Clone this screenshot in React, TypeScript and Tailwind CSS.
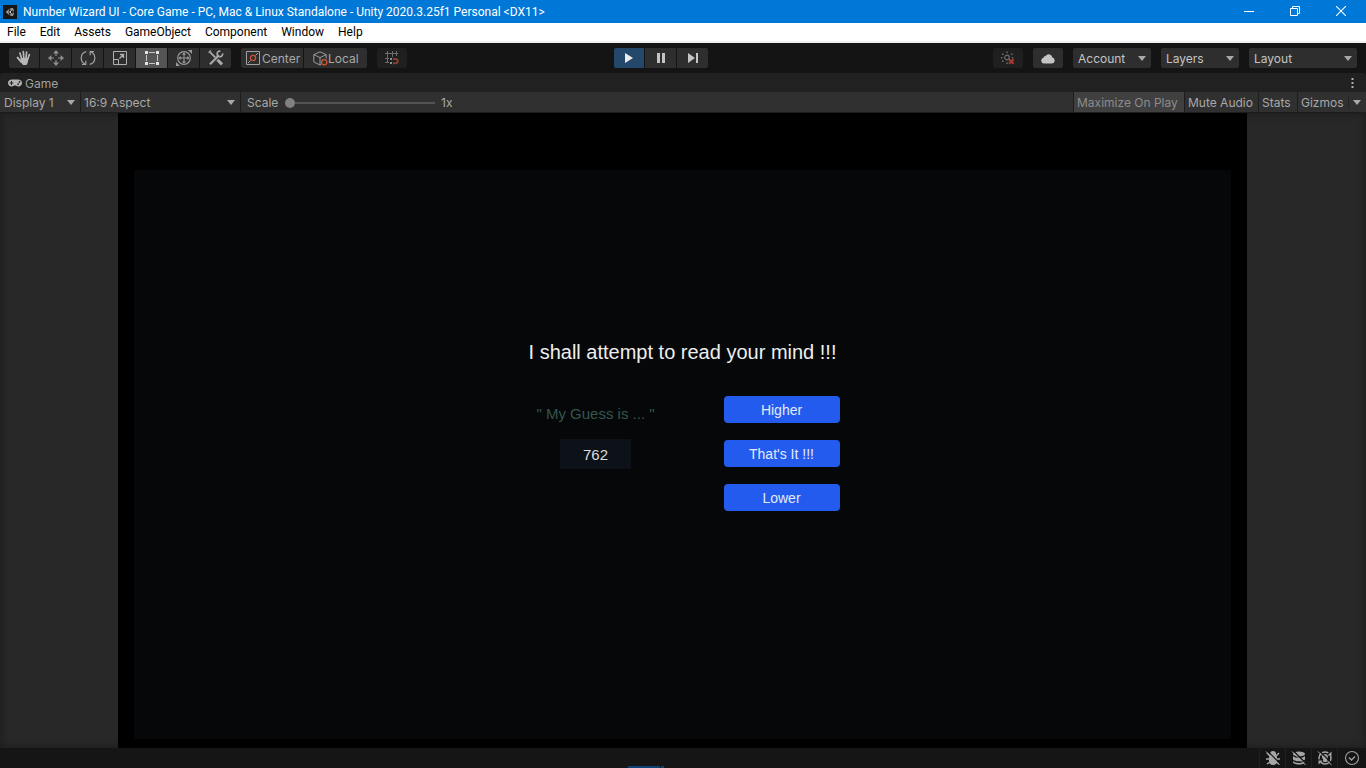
import React from "react";
import { FaGamepad } from "react-icons/fa";

const ui = "font-['Inter',sans-serif]";

function Caret({ className = "" }: { className?: string }) {
  return (
    <svg className={className} width="8" height="5" viewBox="0 0 8 5" aria-hidden="true">
      <path d="M0 0h8L4 5z" fill="currentColor" />
    </svg>
  );
}

function Dropdown({
  label,
  options,
  className,
  selectClassName,
}: {
  label: string;
  options: string[];
  className: string;
  selectClassName: string;
}) {
  return (
    <div className={`relative flex items-center ${className}`}>
      <select
        aria-label={label}
        className={`h-full w-full appearance-none bg-transparent pt-px text-[12px] leading-[19px] outline-none ${selectClassName}`}
      >
        {options.map((o) => (
          <option key={o}>{o}</option>
        ))}
      </select>
      <Caret className="pointer-events-none absolute right-[5px] text-[#a8a8a8]" />
    </div>
  );
}

function UnityLogo() {
  return (
    <svg width="14" height="14" viewBox="0 0 14 14" aria-hidden="true">
      <rect width="14" height="14" fill="#161616" />
      <g fill="none" stroke="#c8c8c8" strokeWidth="1">
        <path d="M3.4 7l2.8-2.4M3.4 7l2.8 2.4M4 7h3.200" />
        <path d="M6.8 4.2l3-.6.4 2.8M6.8 9.8l3 .6.4-2.8M7.2 7l1.800-2.800M7.200 7L9 9.800" />
      </g>
    </svg>
  );
}

function HandIcon() {
  return (
    <svg width="16" height="16" viewBox="0 0 16 16" fill="none" stroke="#b8b8b8" strokeLinecap="round" aria-hidden="true">
      <path d="M5.600 8.500L3.900 3M7.800 8L7.300 1.500M10 8l.6-6M11.800 9l1.500-4.500" strokeWidth="1.7" />
      <path d="M1.600 7.600l3.400 4" strokeWidth="2" />
      <path d="M4.800 8h7.600l-.6 4.500L10.500 15H7l-2.800-3.500z" fill="#b8b8b8" stroke="none" />
    </svg>
  );
}

function MoveIcon() {
  return (
    <svg width="16" height="16" viewBox="0 0 16 16" fill="#8f8f8f" aria-hidden="true">
      <path d="M8 0l3 3.4H5zM8 16l3-3.4H5zM0 8l3.4-3v6zM16 8l-3.4-3v6z" />
      <path d="M7.4 3h1.2v3H7.4zM7.4 10h1.2v3H7.4zM3 7.4h3v1.2H3zM10 7.4h3v1.2h-3z" />
    </svg>
  );
}

function RotateIcon() {
  return (
    <svg width="16" height="16" viewBox="0 0 16 16" fill="none" stroke="#a2a2a2" strokeWidth="1.2" aria-hidden="true">
      <path d="M5.4 14.2C2.8 13.2 1.2 10.8 1.2 8c0-3 2-5.6 5-6.4" />
      <path d="M10.6 1.8c2.6 1 4.2 3.4 4.2 6.2 0 3-2 5.6-5 6.4" />
      <path d="M2 14.5h3.8v-3.8M14 1.5h-3.8v3.8" />
    </svg>
  );
}

function ScaleIcon() {
  return (
    <svg width="16" height="16" viewBox="0 0 16 16" fill="none" stroke="#b0b0b0" aria-hidden="true">
      <path d="M1.5 1.5h13v13h-13zM1.5 9.5h5v5" />
      <path d="M7.5 8.5l4-4M8 4.5h3.5V8" strokeWidth="1.3" />
    </svg>
  );
}

function RectIcon() {
  return (
    <svg width="16" height="16" viewBox="0 0 16 16" aria-hidden="true">
      <path d="M5 2.5h6M5 13.5h6M2.5 5v6M13.5 5v6" stroke="#c8c8c8" />
      <path d="M1 1h3v3H1zM12 1h3v3h-3zM1 12h3v3H1zM12 12h3v3h-3z" fill="#e4e4e4" />
    </svg>
  );
}

function TransformIcon() {
  return (
    <svg width="18" height="18" viewBox="0 0 18 18" fill="none" stroke="#9a9a9a" aria-hidden="true">
      <circle cx="9" cy="9" r="6.3" strokeWidth="1.2" />
      <path d="M9 4v10M4 9h10" />
      <path d="M9 3.5l2 2.3H7zM9 14.5l2-2.3H7zM3.5 9l2.3-2v4zM14.5 9l-2.3-2v4zM17 1v4l-4-4zM1 17v-4l4 4z" fill="#9a9a9a" stroke="none" />
    </svg>
  );
}

function ToolsIcon() {
  return (
    <svg width="16" height="16" viewBox="0 0 16 16" aria-hidden="true">
      <g stroke="#aaaaaa" fill="none">
        <path d="M2 14.2l6-6 3-3" strokeWidth="2.2" />
        <path d="M14.6 3.4A2.8 2.8 0 1 1 12.4 1.2" strokeWidth="1.6" />
        <path d="M2.2 2.4l5 5" strokeWidth="1.8" />
        <path d="M9.4 9.8l4.6 4.6" strokeWidth="3" />
        <path d="M.6 2.8L3 .6" strokeWidth="1.4" />
      </g>
    </svg>
  );
}

function CenterIcon() {
  return (
    <svg width="14" height="14" viewBox="0 0 14 14" fill="none" aria-hidden="true">
      <path d="M.5.5h13v13H.5z" stroke="#a0a0a0" />
      <path d="M2 12l2.5-2.5M9.5 4.5L12 2" stroke="#a0a0a0" />
      <circle cx="7" cy="7" r="2.6" stroke="#d2552f" strokeWidth="1.3" />
    </svg>
  );
}

function LocalIcon() {
  return (
    <svg width="15" height="15" viewBox="0 0 15 15" fill="none" aria-hidden="true">
      <path d="M8 13.5L7 14 .8 11V3.6L7 .8l6.2 2.8v4M.8 3.6L7 6.6l6.2-3M7 6.6V14" stroke="#9a9a9a" />
      <circle cx="11.2" cy="11.2" r="2.6" fill="#2e2e2e" stroke="#d2552f" strokeWidth="1.3" />
    </svg>
  );
}

function SnapIcon() {
  return (
    <svg width="14" height="14" viewBox="0 0 14 14" fill="none" aria-hidden="true">
      <path d="M2.5 0v12M7.5 0v6M11.5 0v5M0 2.5h13M0 7.5h4M0 11.5h4" stroke="#6d6d6d" />
      <path d="M8 7.9h2.6a2.1 2.1 0 0 1 0 4.3H8" stroke="#80402c" strokeWidth="2" />
      <path d="M5 7h2v2H5zM5 11h2v2H5z" fill="#909090" />
    </svg>
  );
}

function PreviewOffIcon() {
  return (
    <svg width="14" height="14" viewBox="0 0 14 14" fill="none" aria-hidden="true">
      <circle cx="6" cy="6.5" r="2.3" stroke="#6c6c6c" strokeWidth="1.2" />
      <path d="M5.3.5h1.5V2H5.3zM1 2.6h1.5v1.5H1zM10 2.6h1.5v1.5H10zM0 6h1.5v1.5H0zM10.8 6h1.5v1.5h-1.5zM1 9.6h1.5v1.5H1zM5.3 11.5h1.5V13H5.3z" fill="#6c6c6c" />
      <path d="M8 8.2l4.6 4.6M12.6 8.2L8 12.8" stroke="#a83a32" strokeWidth="2" />
    </svg>
  );
}

function CloudIcon() {
  return (
    <svg width="14" height="11" viewBox="0 0 14 11" fill="#c4c4c4" aria-hidden="true">
      <path d="M3 10.5a2.9 2.9 0 0 1-.6-5.7A2.2 2.2 0 0 1 4.6 3 3.7 3.7 0 0 1 11.4 4.6a3 3 0 0 1-.4 5.9z" />
    </svg>
  );
}

const tools = [
  { name: "Hand", icon: <HandIcon /> },
  { name: "Move", icon: <MoveIcon /> },
  { name: "Rotate", icon: <RotateIcon /> },
  { name: "Scale", icon: <ScaleIcon /> },
  { name: "Rect", icon: <RectIcon />, active: true },
  { name: "Transform", icon: <TransformIcon /> },
  { name: "Custom tools", icon: <ToolsIcon /> },
];

const menus = ["File", "Edit", "Assets", "GameObject", "Component", "Window", "Help"];

function TitleBar() {
  return (
    <header className="flex h-[23px] shrink-0 items-center bg-[#0078d7] pl-[3px] pr-px font-['Roboto',sans-serif] text-[12px] text-white">
      <UnityLogo />
      <h1 className="ml-1.5 whitespace-nowrap pt-px">
        Number Wizard UI - Core Game - PC, Mac &amp; Linux Standalone - Unity 2020.3.25f1 Personal &lt;DX11&gt;
      </h1>
      <div className="ml-auto flex h-full">
        <button aria-label="Minimize" className="flex w-[46px] items-center justify-center">
          <svg width="10" height="10" viewBox="0 0 10 10"><path d="M0 4.5h10" stroke="#fff" /></svg>
        </button>
        <button aria-label="Restore" className="flex w-[45px] items-center justify-center pb-0.5">
          <svg width="10" height="10" viewBox="0 0 10 10" fill="none" stroke="#fff"><path d="M.5 2.5h7v7h-7zM2.5 2.5v-2h7v7h-2" /></svg>
        </button>
        <button aria-label="Close" className="flex w-12 items-center justify-center pb-0.5">
          <svg width="10" height="10" viewBox="0 0 10 10" stroke="#fff" strokeWidth="1.1"><path d="M0 0l10 10M10 0L0 10" /></svg>
        </button>
      </div>
    </header>
  );
}

function MenuBar() {
  return (
    <nav className="flex h-5 shrink-0 items-center border-b-2 border-[#f0f0f0] bg-white font-['Roboto',sans-serif] text-[12px] text-black">
      {menus.map((m) => (
        <button key={m} className="px-[7px] pt-px leading-[17px]">{m}</button>
      ))}
    </nav>
  );
}

function MainToolbar() {
  const btn = "flex h-5 items-center bg-[#2e2e2e]";
  return (
    <div className="flex h-[30px] shrink-0 items-center bg-[#141414] pr-[9px] text-[12px] text-[#a8a8a8]">
      <div className="flex w-[calc(50%-65px)] shrink-0 items-center pl-[9px]">
        <div className="flex gap-px overflow-hidden rounded-[2px]">
          {tools.map((t) => (
            <button key={t.name} aria-label={t.name} className={`flex h-5 w-[31px] items-center justify-center first:w-[30px] ${t.active ? "bg-[#545454]" : "bg-[#2e2e2e]"}`}>
              {t.icon}
            </button>
          ))}
        </div>
        <div className="ml-2.5 flex gap-px overflow-hidden rounded-[2px]">
          <button className={`${btn} w-[62px] gap-0.5 pl-[5px]`}><CenterIcon /><span className="pt-px">Center</span></button>
          <button className={`${btn} w-[63px] pl-[9px]`}><LocalIcon /><span className="pt-px">Local</span></button>
        </div>
        <button aria-label="Grid snapping" className="ml-2.5 flex h-5 w-[30px] items-center justify-center rounded-[3px] bg-[#1f1f1f]"><SnapIcon /></button>
      </div>
      <div className="flex gap-px overflow-hidden rounded-[2px]">
        <button aria-label="Play" className="flex h-5 w-[30px] items-center justify-center bg-[#24486c]">
          <svg width="8" height="10" viewBox="0 0 8 10" fill="#ececec"><path d="M0 0l8 5-8 5z" /></svg>
        </button>
        <button aria-label="Pause" className={`${btn} w-[31px] justify-center pl-px`}>
          <svg width="8" height="10" viewBox="0 0 8 10" fill="#c4c4c4"><path d="M0 0h3v10H0zM5 0h3v10H5z" /></svg>
        </button>
        <button aria-label="Step" className={`${btn} w-[31px] justify-center pl-px`}>
          <svg width="10" height="10" viewBox="0 0 10 10" fill="#c4c4c4"><path d="M0 0l7 5-7 5zM8 0h2v10H8z" /></svg>
        </button>
      </div>
      <div className="ml-auto flex gap-2.5">
        <button aria-label="Preview packages" className="flex h-5 w-[30px] items-center justify-center rounded-[3px] bg-[#1f1f1f]"><PreviewOffIcon /></button>
        <button aria-label="Cloud services" className={`${btn} w-[30px] justify-center rounded-[2px]`}><CloudIcon /></button>
        <Dropdown label="Account" options={["Account"]} className="h-5 w-[78px] rounded-[2px] bg-[#2e2e2e]" selectClassName="pl-[5px] text-[#c4c4c4]" />
        <Dropdown label="Layers" options={["Layers"]} className="h-5 w-[78px] rounded-[2px] bg-[#2e2e2e]" selectClassName="pl-[5px] text-[#c4c4c4]" />
        <Dropdown label="Layout" options={["Layout"]} className="h-5 w-[108px] rounded-[2px] bg-[#2e2e2e]" selectClassName="pl-[5px] text-[#c4c4c4]" />
      </div>
    </div>
  );
}

function GameTab() {
  return (
    <div className="flex h-[19px] shrink-0 items-center rounded-t-[3px] bg-[#212121] pl-2 pr-3 pt-px text-[12px] text-[#a0a0a0]">
      <FaGamepad size={14} color="#b4b4b4" />
      <span className="ml-[3px] pt-px leading-[17px]">Game</span>
      <button aria-label="Tab menu" className="ml-auto">
        <svg width="3" height="10" viewBox="0 0 3 10" fill="#b0b0b0"><path d="M.5 0h2v2h-2zM.5 4h2v2h-2zM.5 8h2v2h-2z" /></svg>
      </button>
    </div>
  );
}

function GameToolbar() {
  return (
    <div className="flex h-[21px] shrink-0 items-stretch border-b border-[#1c1c1c] bg-[#303030] text-[12px] text-[#a8a8a8]">
      <Dropdown label="Display" options={["Display 1"]} className="w-[81px] border-r border-[#1c1c1c]" selectClassName="pl-1" />
      <Dropdown label="Aspect" options={["16:9 Aspect"]} className="w-40 border-r border-[#1c1c1c]" selectClassName="pl-[3px]" />
      <div className="flex items-center pl-1.5 pt-px">
        <label htmlFor="scale" className="w-[38px]">Scale</label>
        <input
          id="scale"
          type="range"
          min={1}
          max={5}
          step={0.1}
          defaultValue={1}
          className="h-2.5 w-[150px] appearance-none bg-transparent [&::-webkit-slider-runnable-track]:h-0.5 [&::-webkit-slider-runnable-track]:bg-[#535353] [&::-webkit-slider-thumb]:-mt-1 [&::-webkit-slider-thumb]:size-2.5 [&::-webkit-slider-thumb]:appearance-none [&::-webkit-slider-thumb]:rounded-full [&::-webkit-slider-thumb]:bg-[#808080]"
        />
        <output htmlFor="scale" className="ml-1.5">1x</output>
      </div>
      <div className="ml-auto flex items-stretch">
        <button className="w-[111px] border-l border-[#1c1c1c] bg-[#404040] pl-[3px] pt-px text-left text-[#8c8c8c]">Maximize On Play</button>
        <button className="w-[74px] border-l border-[#1c1c1c] pl-[3px] pt-px text-left">Mute Audio</button>
        <button className="w-[39px] border-l border-[#1c1c1c] pl-[3px] pt-px text-left">Stats</button>
        <button className="w-[51px] border-l border-[#1c1c1c] pl-[3px] pt-px text-left">Gizmos</button>
        <button aria-label="Gizmo settings" className="my-1 flex w-[18px] items-center justify-center border-l border-[#242424] pr-0.5"><Caret /></button>
      </div>
    </div>
  );
}

function GameView() {
  const action = "h-[27px] w-full rounded-[4px] bg-[#225bee] pt-px text-[14px] text-[#e4eaf8]";
  return (
    <main className="flex min-h-0 flex-1 justify-center bg-[#282828] pr-px font-['Liberation_Sans',Arial,sans-serif] shadow-[inset_0_0_8px_#1a1a1a]">
      <div className="flex aspect-video h-full flex-col bg-black px-4 pb-[9px] pt-[57px]">
        <section className="flex flex-1 flex-col items-center bg-[#050709] pt-[170px]">
          <p className="whitespace-nowrap text-[20px] leading-6 text-[#eeeeee]">I shall attempt to read your mind !!!</p>
          <div className="mt-8 flex w-[314px] justify-between">
            <div className="flex w-[140px] flex-col items-center pt-2">
              <p className="text-[15px] leading-5 text-[#35554d]">" My Guess is ... "</p>
              <output className="mt-[15px] flex h-[30px] w-[71px] items-center justify-center bg-[#0d1219] pt-0.5 text-[15px] text-[#dcdcdc]">762</output>
            </div>
            <div className="flex w-[116px] flex-col gap-[17px]">
              <button className={action}>Higher</button>
              <button className={action}>That's It !!!</button>
              <button className={action}>Lower</button>
            </div>
          </div>
        </section>
      </div>
    </main>
  );
}

function StatusBar() {
  const cell = "flex w-[26px] items-center justify-center border-l border-[#202020]";
  return (
    <footer className="relative flex h-5 shrink-0 justify-end bg-[#151515] pr-px">
      <div className="absolute bottom-0 left-[46%] flex h-0.5 gap-px">
        <span className="w-8 bg-[#0b4474]" />
        <span className="w-[3px] bg-[#0b4474]" />
      </div>
      <button aria-label="Debug mode" className={cell}>
        <svg width="16" height="16" viewBox="0 0 16 16">
          <path d="M5 4a3 3 0 0 1 6 0v1l1 2v4a4 4 0 0 1-8 0V7l1-2z" fill="#a6a6a6" />
          <path d="M2 3l3 3M14 3l-3 3M1 9h14M2 14l3-2M14 14l-3-2" stroke="#a6a6a6" strokeWidth="1.5" />
          <path d="M2.5 1l13 13" stroke="#151515" strokeWidth="1.2" />
          <path d="M1 1.5l13.500 13.500" stroke="#a6a6a6" />
        </svg>
      </button>
      <button aria-label="Cache server" className={cell}>
        <svg width="16" height="16" viewBox="0 0 16 16">
          <ellipse cx="8" cy="4" rx="6" ry="2.6" fill="#a6a6a6" />
          <path d="M2 6c2 2.500 10 2.500 12 0v3.500c-2 2.400-10 2.400-12 0zM2 11c2 2.500 10 2.500 12 0v1.500c-2 2.800-10 2.800-12 0z" fill="#a6a6a6" />
          <path d="M2.5 1l13 13" stroke="#151515" strokeWidth="1.2" />
          <path d="M1 1.5l13.500 13.500" stroke="#a6a6a6" />
        </svg>
      </button>
      <button aria-label="Auto lighting" className={cell}>
        <svg width="16" height="16" viewBox="0 0 16 16" fill="none">
          <circle cx="8" cy="8" r="6" stroke="#a6a6a6" strokeWidth="1.5" strokeDasharray="14 3" />
          <path d="M8 4a3 3 0 0 1 1.800 5.400V12H6.200V9.400A3 3 0 0 1 8 4z" fill="#a6a6a6" />
          <path d="M14.500 1.500v4h-4zM1.500 14.500v-4h4z" fill="#a6a6a6" />
          <path d="M2.5 1l13 13" stroke="#151515" strokeWidth="1.2" />
          <path d="M1 1.5l13.500 13.500" stroke="#a6a6a6" />
        </svg>
      </button>
      <button aria-label="Background tasks" className="flex w-7 items-center justify-center border-l border-[#202020]">
        <svg width="16" height="16" viewBox="0 0 16 16" fill="none" stroke="#a0a0a0">
          <circle cx="8" cy="8" r="6.5" strokeWidth="1.1" />
          <path d="M5 7.5L7.500 10 11 6.500" strokeWidth="1.4" />
        </svg>
      </button>
    </footer>
  );
}

export default function App() {
  return (
    <div className={`flex h-screen flex-col overflow-hidden bg-[#141414] ${ui}`}>
      <TitleBar />
      <MenuBar />
      <MainToolbar />
      <GameTab />
      <GameToolbar />
      <GameView />
      <StatusBar />
    </div>
  );
}
